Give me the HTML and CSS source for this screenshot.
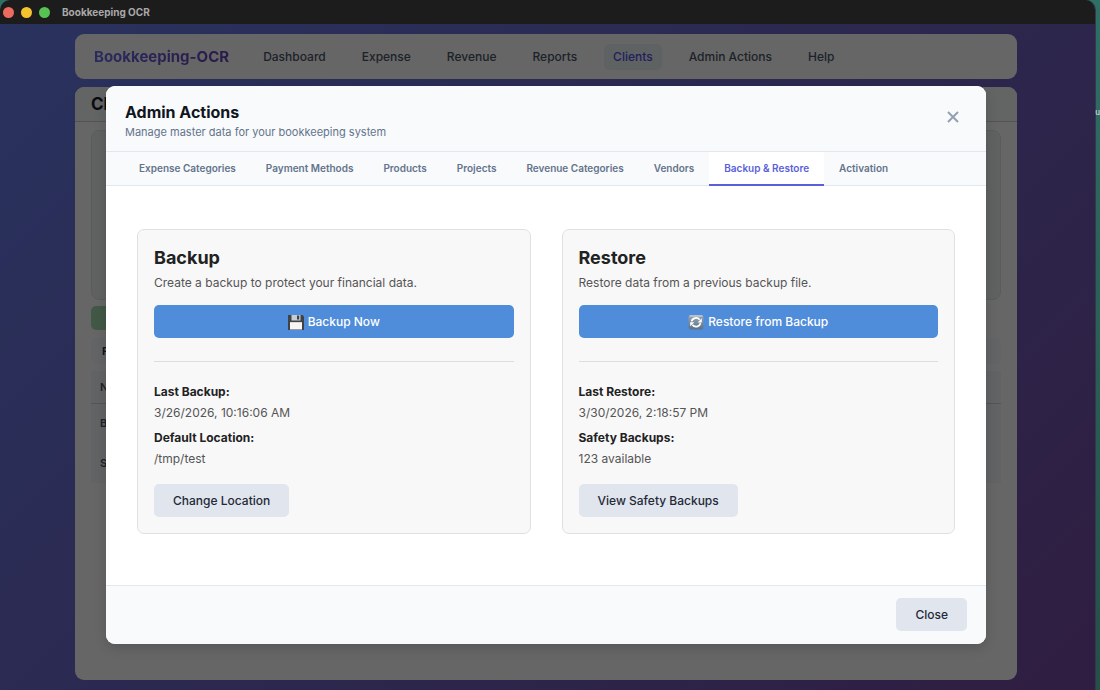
FILE: index.html
```html
<!DOCTYPE html>
<html lang="en">
<head>
<meta charset="utf-8">
<meta name="viewport" content="width=device-width, initial-scale=1">
<title>Bookkeeping OCR</title>
<link rel="stylesheet" href="styles.css">
</head>
<body>
<div class="desktop">
  <div class="window">
    <header class="titlebar">
      <span class="light light-red"></span>
      <span class="light light-yellow"></span>
      <span class="light light-green"></span>
      <span class="titlebar-text">Bookkeeping OCR</span>
    </header>
    <div class="app">
      <nav class="navbar" aria-label="Main">
        <span class="brand">Bookkeeping-OCR</span>
        <div class="nav-links">
          <a class="nav-link" href="#dashboard">Dashboard</a>
          <a class="nav-link" href="#expense">Expense</a>
          <a class="nav-link" href="#revenue">Revenue</a>
          <a class="nav-link" href="#reports">Reports</a>
          <a class="nav-link active" href="#clients">Clients</a>
          <a class="nav-link" href="#admin">Admin Actions</a>
          <a class="nav-link" href="#help">Help</a>
        </div>
      </nav>
      <main class="page">
        <h1 class="page-title">Clients</h1>
        <div class="page-body">
          <div class="form-panel"></div>
          <button class="add-button" type="button" aria-label="Add"></button>
          <div class="filter-row">F</div>
          <table class="list">
            <thead><tr><th>N</th></tr></thead>
            <tbody><tr><td>B</td></tr><tr><td>S</td></tr></tbody>
          </table>
        </div>
      </main>
      <div class="overlay">
        <section class="modal" role="dialog" aria-labelledby="modal-title">
          <header class="modal-header">
            <div>
              <h2 class="modal-title" id="modal-title">Admin Actions</h2>
              <p class="modal-subtitle">Manage master data for your bookkeeping system</p>
            </div>
            <button class="modal-x" type="button" aria-label="Close dialog">
              <svg width="12" height="12" viewBox="0 0 12 12"><path d="M1 1l10 10M11 1L1 11" fill="none" stroke="currentColor" stroke-width="2"/></svg>
            </button>
          </header>
          <div class="tabs" role="tablist">
            <button class="tab" role="tab" type="button">Expense Categories</button>
            <button class="tab" role="tab" type="button">Payment Methods</button>
            <button class="tab" role="tab" type="button">Products</button>
            <button class="tab" role="tab" type="button">Projects</button>
            <button class="tab" role="tab" type="button">Revenue Categories</button>
            <button class="tab" role="tab" type="button">Vendors</button>
            <button class="tab selected" role="tab" type="button" aria-selected="true">Backup &amp; Restore</button>
            <button class="tab" role="tab" type="button">Activation</button>
          </div>
          <div class="modal-body">
            <article class="card">
              <h3 class="card-title">Backup</h3>
              <p class="card-text">Create a backup to protect your financial data.</p>
              <button class="primary" type="button">
                <svg width="16" height="16" viewBox="0 0 16 16">
                  <path d="M0 1h14.5L16 2.500V16H0z" fill="#3f4247"/>
                  <path d="M3.500 1h9v5.500h-9z" fill="#c9cdd2"/>
                  <path d="M9 1.500h2.200v4H9z" fill="#3f4247"/>
                  <path d="M2 8h12v7.500H2z" fill="#f7f5f4"/>
                  <path d="M2 8h12v1H2z" fill="#d8dadd"/>
                </svg>
                Backup Now
              </button>
              <hr class="divider">
              <dl class="facts">
                <dt>Last Backup:</dt><dd>3/26/2026, 10:16:06 AM</dd>
                <dt>Default Location:</dt><dd>/tmp/test</dd>
              </dl>
              <button class="secondary" type="button">Change Location</button>
            </article>
            <article class="card">
              <h3 class="card-title">Restore</h3>
              <p class="card-text">Restore data from a previous backup file.</p>
              <button class="primary" type="button">
                <svg width="16" height="16" viewBox="0 0 16 16">
                  <defs><linearGradient id="tile" x1="0" y1="0" x2="0" y2="1"><stop offset="0" stop-color="#9aa9b8"/><stop offset="1" stop-color="#5c7188"/></linearGradient></defs>
                  <rect x=".5" y="1" width="15" height="14.500" rx="2.500" fill="url(#tile)"/>
                  <path d="M1.500 2h13" stroke="#d3dae1" stroke-width="1"/>
                  <path d="M3.600 7.400C4.300 3.700 9.400 2.800 11.600 5.800M12.400 9.200C11.700 13 6.600 13.800 4.400 10.800" fill="none" stroke="#fff" stroke-width="1.700"/>
                  <path d="M13.800 4.300v4.100H9.600zM2.200 12.300V8.200h4.200z" fill="#fff"/>
                </svg>
                Restore from Backup
              </button>
              <hr class="divider">
              <dl class="facts">
                <dt>Last Restore:</dt><dd>3/30/2026, 2:18:57 PM</dd>
                <dt>Safety Backups:</dt><dd>123 available</dd>
              </dl>
              <button class="secondary" type="button">View Safety Backups</button>
            </article>
          </div>
          <footer class="modal-footer">
            <button class="secondary" type="button">Close</button>
          </footer>
        </section>
      </div>
    </div>
  </div>
  <span class="desktop-text">u</span>
</div>
</body>
</html>
```
FILE: styles.css
```css
* { box-sizing: border-box; }
body {
  margin: 0;
  font-family: Inter, "Liberation Sans", sans-serif;
  font-size: 12px;
}
h1, h2, h3, p, dl, dd { margin: 0; }
button { font: inherit; border: 0; padding: 0; }
svg { display: block; }

.desktop {
  position: relative;
  display: flex;
  min-height: 100vh;
  padding-right: 4px;
  overflow: hidden;
  background: linear-gradient(#2f6f66, #245048);
}
.desktop-text {
  position: absolute;
  right: 0;
  top: 107px;
  font-size: 8px;
  color: #e5eeec;
}
.window {
  flex: 1;
  display: flex;
  flex-direction: column;
  border-right: 1px solid #33384a;
  border-radius: 10px 10px 0 0;
  overflow: hidden;
}
.titlebar {
  display: flex;
  align-items: center;
  gap: 7px;
  height: 24px;
  padding-left: 3px;
  background: #1c1c1c;
}
.light { width: 11px; height: 11px; border-radius: 50%; }
.light-red { background: #ed6a5e; }
.light-yellow { background: #f5c32f; }
.light-green { background: #57c353; }
.titlebar-text { margin-left: 5px; color: #a9a9a9; font-size: 10px; font-weight: 700; }

.app {
  position: relative;
  flex: 1;
  display: flex;
  flex-direction: column;
  gap: 8px;
  padding: 10px 78px 10px 75px;
  background: linear-gradient(135deg, #667eea, #764ba2);
}
.navbar {
  display: flex;
  align-items: center;
  gap: 25px;
  height: 45px;
  padding: 0 19px;
  border-radius: 9px;
  background: #fff;
}
.brand {
  font-size: 15px;
  font-weight: 700;
  color: transparent;
  background: linear-gradient(135deg, #6670f0, #6a3fb0);
  background-clip: text;
}
.nav-links { display: flex; gap: 18px; }
.nav-link {
  padding: 0 9px;
  border-radius: 5px;
  line-height: 26px;
  font-weight: 500;
  color: #4a5568;
  text-decoration: none;
}
.nav-link.active { background: #edf4f8; color: #554fe8; }

.page {
  flex: 1;
  border-radius: 9px;
  background: #fff;
  overflow: hidden;
}
.page-title {
  padding: 0 16px;
  border-bottom: 1px solid #cbd0d6;
  background: #f8f9fa;
  line-height: 34px;
  font-size: 17px;
  color: #1a202c;
}
.page-body { display: flex; flex-direction: column; align-items: flex-start; padding: 8px 16px; }
.form-panel {
  width: 100%;
  height: 170px;
  border: 1px solid #dfe6ea;
  border-radius: 8px;
  background: #f0f5f5;
}
.add-button { width: 90px; height: 24px; margin-top: 6px; border-radius: 5px; background: #a5dcb0; }
.filter-row {
  width: 100%;
  margin-top: 8px;
  padding-left: 11px;
  border-radius: 5px;
  background: #f7fafc;
  line-height: 26px;
  font-size: 11px;
  font-weight: 700;
  color: #2d3748;
}
.list { width: 100%; margin-top: 7px; border-collapse: collapse; background: #f3f7fa; }
.list th, .list td { padding: 0 9px; height: 40px; text-align: left; font-size: 11px; font-weight: 600; color: #4a5568; }
.list th { height: 32px; border-bottom: 1px solid #cbd5e0; }

.overlay {
  position: absolute;
  inset: 0;
  display: flex;
  justify-content: center;
  align-items: flex-start;
  padding: 62px 109px 0 106px;
  background: rgba(0, 0, 0, 0.6);
}
.modal {
  flex: 1;
  border-radius: 9px;
  overflow: hidden;
  background: #fff;
  box-shadow: 0 4px 12px rgba(0, 0, 0, 0.15);
}
.modal-header {
  display: flex;
  justify-content: space-between;
  align-items: flex-start;
  padding: 15px 25px 10px 19px;
  border-bottom: 1px solid #e2e8f0;
  background: #f8fafc;
}
.modal-title { line-height: 22px; font-size: 16px; font-weight: 700; color: #11151c; }
.modal-subtitle { line-height: 18px; font-size: 11px; color: #64748b; }
.modal-x { margin-top: 8px; padding: 2px; background: none; color: #94a0b2; }
.tabs {
  display: flex;
  padding: 0 18px;
  border-bottom: 1px solid #e2e8f0;
  background: #f8fafc;
}
.tab {
  padding: 0 15px;
  margin-bottom: -1px;
  border-bottom: 2px solid transparent;
  background: none;
  line-height: 32px;
  font-size: 10px;
  font-weight: 600;
  color: #64748b;
  white-space: nowrap;
}
.tab.selected { border-color: #5a5fd8; background: #fff; color: #5a5fd8; }
.modal-body {
  display: grid;
  grid-template-columns: 1fr 1fr;
  gap: 31px;
  padding: 43px 31px 51px;
}
.card {
  padding: 16px;
  border: 1px solid #e0e0e0;
  border-radius: 7px;
  background: #f8f8f8;
}
.card-title { line-height: 24px; font-size: 18px; font-weight: 700; color: #222; }
.card-text { margin-top: 3px; line-height: 20px; color: #555; }
.primary {
  display: flex;
  justify-content: center;
  align-items: center;
  gap: 4px;
  width: 100%;
  height: 33px;
  margin-top: 12px;
  border-radius: 5px;
  background: #4f8cda;
  color: #fff;
  font-weight: 500;
}
.divider { margin: 23px 0 19px; border: 0; border-top: 1px solid #dedede; }
.facts { line-height: 21px; }
.facts dt { font-weight: 700; color: #222; }
.facts dd { color: #555; }
.facts dd + dt { margin-top: 4px; }
.facts + .secondary { margin-top: 15px; }
.secondary {
  height: 33px;
  padding: 0 19px;
  border-radius: 5px;
  background: #e0e5ee;
  color: #1f2937;
  font-weight: 500;
}
.modal-footer {
  display: flex;
  justify-content: flex-end;
  padding: 12px 19px 13px;
  border-top: 1px solid #e2e8f0;
  background: #f8fafc;
}
```
